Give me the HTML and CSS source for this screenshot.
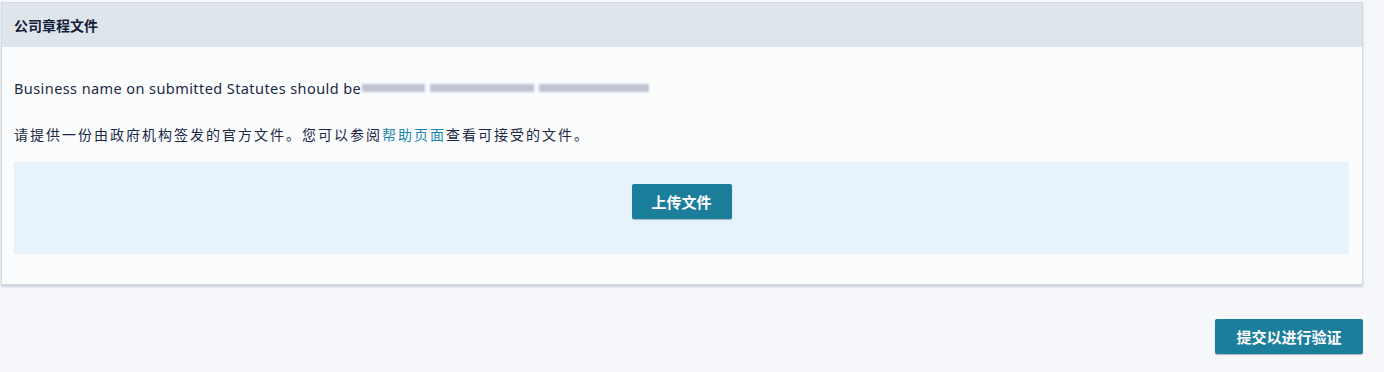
FILE: index.html
```html
<!DOCTYPE html>
<html lang="zh-CN">
<head>
<meta charset="utf-8">
<title>公司章程文件</title>
<link rel="stylesheet" href="styles.css">
</head>
<body>
<div class="page">
  <section class="card">
    <header class="card-head">公司章程文件</header>
    <div class="card-body">
      <p class="line line-en">Business name on submitted Statutes should be<span class="redact"><span class="r r1"></span><span class="r r2"></span><span class="r r3"></span></span></p>
      <p class="line line-zh">请提供一份由政府机构签发的官方文件。您可以参阅<a class="link" href="#">帮助页面</a>查看可接受的文件。</p>
      <div class="upload">
        <button class="btn btn-upload" type="button">上传文件</button>
      </div>
    </div>
  </section>
  <div class="actions">
    <button class="btn btn-submit" type="button">提交以进行验证</button>
  </div>
</div>
</body>
</html>
```

FILE: styles.css
```css
* { box-sizing: border-box; }
html, body { margin: 0; padding: 0; }
body {
  background: #f6f7fa;
  font-family: "Noto Sans", "Noto Sans CJK SC", sans-serif;
  color: #1c2842;
  width: 1384px;
  height: 372px;
  overflow: hidden;
}
.page {
  padding: 2px 21px 0 1px;
}
.card {
  background: #fbfcfe;
  border: 1px solid #d3dae2;
  box-shadow: 0 2px 2px rgba(120, 140, 160, 0.35);
}
.card-head {
  height: 44px;
  background: #dee6ec;
  display: flex;
  align-items: center;
  padding-left: 12px;
  font-family: "Noto Sans CJK SC", sans-serif;
  font-size: 14px;
  font-weight: 700;
  color: #14203a;
}
.card-body {
  padding: 31px 13px 30px 12px;
}
.line {
  margin: 0;
  line-height: 20px;
}
.line-en {
  font-size: 14.5px;
  letter-spacing: 0.42px;
  display: flex;
  align-items: center;
}
.line-zh {
  margin-top: 26px;
  font-family: "Noto Sans CJK SC", sans-serif;
  font-size: 14px;
  letter-spacing: 2px;
}
.link {
  color: #1f86ad;
  text-decoration: none;
}
.redact {
  display: inline-flex;
  align-items: center;
  gap: 5px;
  margin-left: 1px;
  filter: blur(1.2px);
}
.r {
  display: inline-block;
  height: 8px;
  background: #c0c4d2;
}
.r1 { width: 63px; }
.r2 { width: 104px; }
.r3 { width: 110px; }
.upload {
  margin-top: 18px;
  height: 92px;
  background: #e7f3fc;
  display: flex;
  justify-content: center;
  padding-top: 22px;
}
.btn {
  border: 0;
  border-radius: 2px;
  background: #1b7e9a;
  color: #ffffff;
  font-family: "Noto Sans CJK SC", sans-serif;
  font-weight: 700;
  font-size: 15px;
  cursor: pointer;
  box-shadow: 0 1px 1px rgba(0, 40, 60, 0.3);
}
.btn-upload {
  width: 100px;
  height: 35px;
}
.btn-submit {
  width: 148px;
  height: 35px;
}
.actions {
  display: flex;
  justify-content: flex-end;
  margin-top: 34px;
}
```
